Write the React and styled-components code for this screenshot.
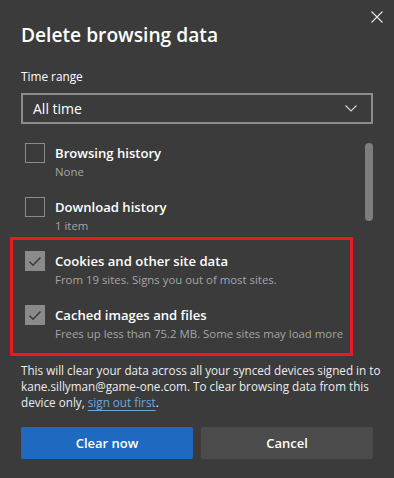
import React, { useState } from 'react';
import styled, { createGlobalStyle } from 'styled-components';

const GlobalStyle = createGlobalStyle`
  html, body {
    margin: 0;
    padding: 0;
    background: #3b3b3b;
  }
  body {
    font-family: "Segoe UI", "Open Sans", "Noto Sans", sans-serif;
    color: #ffffff;
  }
`;

const Dialog = styled.div`
  position: relative;
  width: 394px;
  height: 478px;
  box-sizing: border-box;
  padding: 21px 21px 0 21px;
  background: #3b3b3b;
  overflow: hidden;
`;

const CloseButton = styled.button`
  position: absolute;
  top: 9px;
  right: 9px;
  width: 16px;
  height: 16px;
  padding: 0;
  border: none;
  background: transparent;
  cursor: pointer;
  display: flex;
  align-items: center;
  justify-content: center;
`;

const Title = styled.h1`
  margin: 0;
  font-size: 19.2px;
  font-weight: 600;
  line-height: 28px;
`;

const FieldLabel = styled.div`
  margin-top: 18px;
  font-size: 11.8px;
  line-height: 18px;
`;

const Select = styled.div`
  margin-top: 8px;
  height: 31px;
  box-sizing: border-box;
  border: 2px solid #8c8c8c;
  display: flex;
  align-items: center;
  justify-content: space-between;
  padding: 0 14px 0 10px;
  font-size: 14px;
`;

const ListArea = styled.div`
  display: flex;
  margin-top: 19px;
`;

const List = styled.div`
  flex: 1;
  display: flex;
  flex-direction: column;

  & > label + label {
    margin-top: 14px;
  }
`;

const Highlight = styled.div`
  margin-left: -11px;
  width: 343px;
  box-sizing: border-box;
  border: 3px solid #e81b25;
  padding: 11px 0 8px 12px;
  display: flex;
  flex-direction: column;
  gap: 14px;
`;

const Row = styled.label`
  display: flex;
  align-items: flex-start;
  gap: 10px;
  height: 40px;
  padding-left: ${(p) => (p.$inBox ? '0' : '4px')};
  cursor: pointer;
`;

const Box = styled.span`
  width: 20px;
  height: 20px;
  box-sizing: border-box;
  flex: none;
  border: 1px solid #8a8a8a;
  background: ${(p) => (p.$checked ? '#8a8a8a' : 'transparent')};
  display: flex;
  align-items: center;
  justify-content: center;
`;

const RowText = styled.div`
  display: flex;
  flex-direction: column;
`;

const RowTitle = styled.span`
  font-size: 13.1px;
  font-weight: 600;
  line-height: 20px;
`;

const RowSub = styled.span`
  font-size: 11.4px;
  color: #a5a5a5;
  line-height: 18px;
  white-space: nowrap;
`;

const Scrollbar = styled.div`
  width: 8px;
  height: 78px;
  border-radius: 4px;
  background: #7d7d7d;
`;

const Note = styled.p`
  margin: 6px 0 0 0;
  font-size: 11.7px;
  line-height: 16px;
  color: #ececec;
  white-space: nowrap;
`;

const Link = styled.a`
  color: #6aa8e0;
  text-decoration: underline;
  text-underline-offset: 3px;
`;

const Buttons = styled.div`
  display: grid;
  grid-template-columns: 1fr 1fr;
  gap: 8px;
  margin-top: 17px;
`;

const Button = styled.button`
  height: 32px;
  border: none;
  border-radius: 2px;
  font-family: inherit;
  font-size: 13px;
  font-weight: 600;
  color: #ffffff;
  background: ${(p) => (p.$primary ? '#1f69c1' : '#4b4b4b')};
  cursor: pointer;
`;

const Check = () => (
  <svg width="14" height="11" viewBox="0 0 14 11">
    <path d="M1.5 5.8 L5 9.2 L12.5 1.5" fill="none" stroke="#3b3b3b" strokeWidth="1.6" />
  </svg>
);

const items = [
  { title: 'Browsing history', sub: 'None', checked: false },
  { title: 'Download history', sub: '1 item', checked: false },
  { title: 'Cookies and other site data', sub: 'From 19 sites. Signs you out of most sites.', checked: true },
  { title: 'Cached images and files', sub: 'Frees up less than 75.2 MB. Some sites may load more', checked: true },
];

function Item({ item, inBox, onToggle }) {
  return (
    <Row $inBox={inBox} onClick={onToggle}>
      <Box $checked={item.checked}>{item.checked && <Check />}</Box>
      <RowText>
        <RowTitle>{item.title}</RowTitle>
        <RowSub>{item.sub}</RowSub>
      </RowText>
    </Row>
  );
}

export default function App() {
  const [list, setList] = useState(items);
  const toggle = (i) => setList((prev) => prev.map((it, j) => (j === i ? { ...it, checked: !it.checked } : it)));

  return (
    <Dialog>
      <GlobalStyle />
      <CloseButton aria-label="Close">
        <svg width="12" height="12" viewBox="0 0 12 12">
          <path d="M0.5 0.5 L11.5 11.5 M11.5 0.5 L0.5 11.5" stroke="#e6e6e6" strokeWidth="1.1" />
        </svg>
      </CloseButton>
      <Title>Delete browsing data</Title>
      <FieldLabel>Time range</FieldLabel>
      <Select>
        <span>All time</span>
        <svg width="12" height="7" viewBox="0 0 12 7">
          <path d="M0.5 0.5 L6 6 L11.5 0.5" fill="none" stroke="#d0d0d0" strokeWidth="1.2" />
        </svg>
      </Select>
      <ListArea>
        <List>
          <Item item={list[0]} onToggle={() => toggle(0)} />
          <Item item={list[1]} onToggle={() => toggle(1)} />
          <Highlight>
            <Item item={list[2]} inBox onToggle={() => toggle(2)} />
            <Item item={list[3]} inBox onToggle={() => toggle(3)} />
          </Highlight>
        </List>
        <Scrollbar />
      </ListArea>
      <Note>
        This will clear your data across all your synced devices signed in to
        <br />
        kane.sillyman@game-one.com. To clear browsing data from this
        <br />
        device only, <Link href="#">sign out first</Link>.
      </Note>
      <Buttons>
        <Button $primary>Clear now</Button>
        <Button>Cancel</Button>
      </Buttons>
    </Dialog>
  );
}
